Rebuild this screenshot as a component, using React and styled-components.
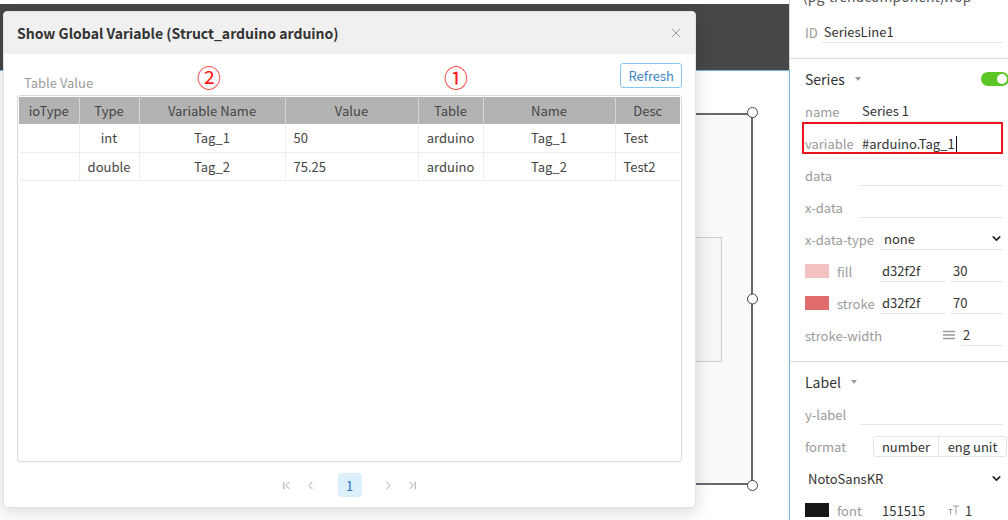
import styled, { createGlobalStyle } from "styled-components";
import { X, ChevronFirst, ChevronLast, ChevronLeft, ChevronRight, ChevronDown } from "lucide-react";

const GlobalStyle = createGlobalStyle`
  html, body { margin:0; padding:0; }
  body {
    font-family: "Noto Sans CJK KR", "Noto Sans", sans-serif;
    font-size:13px;
    color:#333;
    background:#fff;
  }
  * { box-sizing:border-box; }
`;

const Screen = styled.div`
  position:relative;
  display:flex;
  width:1008px;
  height:520px;
  overflow:hidden;
`;

/* ---------- canvas (behind the dialog) ---------- */

const Canvas = styled.div`
  width:790px;
  display:flex;
  flex-direction:column;
`;

const TopArea = styled.div`
  height:70px;
  padding-top:4px;
  border-right:1px solid #d6d6d6;
`;

const DarkBar = styled.div`
  height:100%;
  background:#474747;
`;

const Page = styled.div`
  position:relative;
  flex:1;
  background:#fff;
  border-top:1px solid #7bb2de;
  border-right:1px solid #7bb2de;
`;

const Chart = styled.div`
  position:absolute;
  left:401px;
  top:42px;
  width:352px;
  height:372px;
  background:#f9f9f9;
  border:2px solid #666a6e;
`;

const InnerBox = styled.div`
  position:absolute;
  left:100px;
  right:29px;
  top:122px;
  height:125px;
  border:1px solid #cdcdcd;
  background:#f6f6f6;
`;

const Handle = styled.span`
  position:absolute;
  right:-7px;
  width:11px;
  height:11px;
  border-radius:50%;
  background:#fff;
  border:1.5px solid #444;
  ${p => p.$pos === "top" && "top:-8px;"}
  ${p => p.$pos === "mid" && "top:50%; transform:translateY(-50%);"}
  ${p => p.$pos === "bottom" && "bottom:-8px;"}
`;

/* ---------- dialog ---------- */

const Modal = styled.div`
  position:absolute;
  left:3px;
  top:11px;
  width:693px;
  height:497px;
  background:#fff;
  border:1px solid #e2e2e2;
  border-radius:4px;
  box-shadow:0 4px 18px rgba(0,0,0,0.16);
  display:flex;
  flex-direction:column;
  z-index:5;
`;

const ModalHeader = styled.div`
  height:42px;
  flex-shrink:0;
  display:flex;
  align-items:center;
  justify-content:space-between;
  padding:0 11px 0 13px;
  background:#f0f0f0;
  border-radius:4px 4px 0 0;
`;

const Title = styled.h2`
  margin:0;
  font-size:14px;
  font-weight:700;
  color:#333;
`;

const CloseBtn = styled.button`
  display:flex;
  padding:0;
  border:none;
  background:none;
  color:#9a9a9a;
  cursor:pointer;
`;

const ModalBody = styled.div`
  flex:1;
  padding:9px 13px 0 13px;
  display:flex;
  flex-direction:column;
`;

const Toolbar = styled.div`
  position:relative;
  height:32px;
  display:flex;
  justify-content:space-between;
`;

const ToolLabel = styled.span`
  align-self:flex-end;
  padding-left:7px;
  line-height:24px;
  color:#9a9a9a;
`;

const RefreshBtn = styled.button`
  height:25px;
  padding:0 7px;
  border:1px solid #86c8f2;
  border-radius:3px;
  background:#fff;
  color:#3c86c2;
  font:inherit;
  font-size:13px;
  cursor:pointer;
`;

const Mark = styled.span`
  position:absolute;
  top:1px;
  left:${p => p.$x}px;
  font-size:24px;
  line-height:26px;
  color:#ff1a1a;
`;

const TableBox = styled.div`
  height:367px;
  border:1px solid #d9d9d9;
  border-radius:3px;
  padding:1px;
`;

const Table = styled.table`
  width:100%;
  border-collapse:collapse;
  table-layout:fixed;
`;

const Col = styled.col`
  width:${p => p.$w}px;
`;

const Th = styled.th`
  height:27px;
  padding:0;
  background:#b3b3b3;
  color:#444;
  font-weight:400;
  font-size:13px;
  text-align:center;
  border-left:1px solid #d4d4d4;
  &:first-child { border-left:none; }
`;

const Td = styled.td`
  height:28px;
  padding:0 8px;
  color:#444;
  text-align:${p => p.$align || "center"};
  border-left:1px solid #ededed;
  border-bottom:1px solid #ededed;
  &:first-child { border-left:none; }
`;

const Pager = styled.div`
  height:46px;
  display:flex;
  align-items:center;
  justify-content:center;
`;

const NavBtn = styled.span`
  width:24px;
  display:flex;
  justify-content:center;
  color:#8e8e8e;
`;

const PageNum = styled.span`
  width:24px;
  height:24px;
  margin:0 15px;
  display:flex;
  align-items:center;
  justify-content:center;
  border-radius:3px;
  background:#dcf0fc;
  color:#2d74b8;
`;

/* ---------- property panel ---------- */

const Panel = styled.aside`
  width:218px;
  height:520px;
  overflow:hidden;
  background:#fff;
`;

const ClipTitle = styled.div`
  height:6px;
  overflow:hidden;
  padding-left:13px;
`;

const ClipText = styled.div`
  margin-top:-13px;
  line-height:18px;
  font-size:14px;
  color:#555;
  white-space:nowrap;
`;

const Section = styled.section`
  padding:${p => p.$top}px 5px ${p => p.$bottom}px 15px;
  border-bottom:${p => (p.$last ? "none" : "1px solid #d9d9d9")};
`;

const SectionHead = styled.div`
  height:28px;
  margin-bottom:2px;
  display:flex;
  align-items:center;
  justify-content:space-between;
  font-size:14px;
  color:#333;
`;

const HeadTitle = styled.span`
  display:flex;
  align-items:center;
`;

const Caret = styled.span`
  width:0;
  height:0;
  margin-left:10px;
  border-left:3px solid transparent;
  border-right:3px solid transparent;
  border-top:4px solid #9a9a9a;
`;

const Toggle = styled.span`
  position:relative;
  width:28px;
  height:14px;
  margin-right:-6px;
  border-radius:7px;
  background:#5cc626;
  &::after {
    content:"";
    position:absolute;
    right:2px;
    top:2px;
    width:10px;
    height:10px;
    border-radius:50%;
    background:#fff;
  }
`;

const Row = styled.div`
  position:relative;
  height:32px;
  display:flex;
  align-items:center;
`;

const RowLabel = styled.span`
  flex-shrink:0;
  width:${p => (p.$w ? `${p.$w}px` : "auto")};
  margin-right:${p => p.$gap || 0}px;
  ${p => p.$grow && "flex:1;"}
  color:#9a9a9a;
  white-space:nowrap;
`;

const Field = styled.div`
  height:22px;
  line-height:21px;
  padding-left:${p => p.$pad ?? 2}px;
  color:#333;
  white-space:nowrap;
  ${p => (p.$w ? `width:${p.$w}px; flex-shrink:0;` : "flex:1;")}
  margin-left:${p => p.$ml || 0}px;
  border-bottom:${p => (p.$plain ? "none" : "1px solid #e6e6e6")};
  display:flex;
  align-items:center;
  justify-content:space-between;
`;

const Cursor = styled.span`
  display:inline-block;
  width:1px;
  height:17px;
  margin-left:1px;
  vertical-align:middle;
  background:#111;
`;

const RedBox = styled.div`
  position:absolute;
  left:-3px;
  right:0;
  top:-5px;
  height:32px;
  border:2px solid #e8161e;
  pointer-events:none;
`;

const Swatch = styled.span`
  width:24px;
  height:14px;
  margin-right:8px;
  flex-shrink:0;
  background:${p => p.$color};
`;

const Segment = styled.div`
  display:flex;
  height:21px;
  flex-shrink:0;
`;

const SegBtn = styled.span`
  width:${p => p.$w}px;
  display:flex;
  align-items:center;
  justify-content:center;
  border:1px solid #e4e4e4;
  border-left:${p => (p.$first ? "1px solid #e4e4e4" : "none")};
  border-radius:${p => (p.$first ? "3px 0 0 3px" : "0 3px 3px 0")};
  color:#333;
`;

const Value = styled.span`
  width:${p => p.$w}px;
  flex-shrink:0;
  color:#333;
`;

const IconSlot = styled.span`
  display:flex;
  align-items:center;
  margin-right:${p => p.$gap || 0}px;
`;

const columns = [
  { label: "ioType", w: 60 },
  { label: "Type", w: 60 },
  { label: "Variable Name", w: 146 },
  { label: "Value", w: 133, align: "left" },
  { label: "Table", w: 65 },
  { label: "Name", w: 132 },
  { label: "Desc", w: 65, align: "left" },
];

const rows = [
  ["", "int", "Tag_1", "50", "arduino", "Tag_1", "Test"],
  ["", "double", "Tag_2", "75.25", "arduino", "Tag_2", "Test2"],
];

const LinesIcon = () => (
  <svg width="12" height="10" viewBox="0 0 12 10">
    <path d="M0 1.5h12M0 5h12M0 8.5h12" stroke="#9a9a9a" strokeWidth="1.4" />
  </svg>
);

const FontSizeIcon = () => (
  <svg width="11" height="10" viewBox="0 0 11 10" fill="none" stroke="#9a9a9a" strokeWidth="1">
    <path d="M0.5 4.5h4M2.5 4.5v5M5 1h6M8 1v8.5" />
  </svg>
);

const App = () => {
  return (
    <Screen>
      <GlobalStyle />

      <Canvas>
        <TopArea>
          <DarkBar />
        </TopArea>
        <Page>
          <Chart>
            <InnerBox />
            <Handle $pos="top" />
            <Handle $pos="mid" />
            <Handle $pos="bottom" />
          </Chart>
        </Page>
      </Canvas>

      <Panel>
        <ClipTitle>
          <ClipText>(pg-trendcomponent).Top</ClipText>
        </ClipTitle>

        <Section $top={10} $bottom={10}>
          <Row>
            <RowLabel $gap={4}>ID</RowLabel>
            <Field>SeriesLine1</Field>
          </Row>
        </Section>

        <Section $top={6} $bottom={10}>
          <SectionHead>
            <HeadTitle>Series<Caret /></HeadTitle>
            <Toggle />
          </SectionHead>
          <Row>
            <RowLabel $w={55}>name</RowLabel>
            <Field>Series 1</Field>
          </Row>
          <Row>
            <RowLabel $w={55}>variable</RowLabel>
            <Field $plain>
              <span>#arduino.Tag_1<Cursor /></span>
            </Field>
            <RedBox />
          </Row>
          <Row>
            <RowLabel $w={55}>data</RowLabel>
            <Field />
          </Row>
          <Row>
            <RowLabel $w={55}>x-data</RowLabel>
            <Field />
          </Row>
          <Row>
            <RowLabel $gap={6}>x-data-type</RowLabel>
            <Field $pad={4}>
              none
              <ChevronDown size={13} strokeWidth={3} color="#222" />
            </Field>
          </Row>
          <Row>
            <Swatch $color="#f3c1c1" />
            <RowLabel $w={43}>fill</RowLabel>
            <Field $w={65}>d32f2f</Field>
            <Field $ml={6}>30</Field>
          </Row>
          <Row>
            <Swatch $color="#e06b6b" />
            <RowLabel $w={43}>stroke</RowLabel>
            <Field $w={65}>d32f2f</Field>
            <Field $ml={6}>70</Field>
          </Row>
          <Row>
            <RowLabel $grow>stroke-width</RowLabel>
            <IconSlot $gap={6}><LinesIcon /></IconSlot>
            <Field $w={42}>2</Field>
          </Row>
        </Section>

        <Section $top={6} $bottom={0} $last>
          <SectionHead>
            <HeadTitle>Label<Caret /></HeadTitle>
          </SectionHead>
          <Row>
            <RowLabel $w={55}>y-label</RowLabel>
            <Field />
          </Row>
          <Row>
            <RowLabel $w={68}>format</RowLabel>
            <Segment>
              <SegBtn $first $w={66}>number</SegBtn>
              <SegBtn $w={68}>eng unit</SegBtn>
            </Segment>
          </Row>
          <Row>
            <Field $plain $pad={3}>
              NotoSansKR
              <ChevronDown size={13} strokeWidth={3} color="#222" />
            </Field>
          </Row>
          <Row>
            <Swatch $color="#151515" />
            <RowLabel $w={45}>font</RowLabel>
            <Value $w={66}>151515</Value>
            <IconSlot $gap={6}><FontSizeIcon /></IconSlot>
            <Value $w={20}>1</Value>
          </Row>
        </Section>
      </Panel>

      <Modal>
        <ModalHeader>
          <Title>Show Global Variable (Struct_arduino arduino)</Title>
          <CloseBtn aria-label="Close">
            <X size={16} strokeWidth={1.5} />
          </CloseBtn>
        </ModalHeader>

        <ModalBody>
          <Toolbar>
            <ToolLabel>Table Value</ToolLabel>
            <Mark $x={180}>②</Mark>
            <Mark $x={427}>①</Mark>
            <RefreshBtn>Refresh</RefreshBtn>
          </Toolbar>

          <TableBox>
            <Table>
              <colgroup>
                {columns.map(c => <Col key={c.label} $w={c.w} />)}
              </colgroup>
              <thead>
                <tr>
                  {columns.map(c => <Th key={c.label}>{c.label}</Th>)}
                </tr>
              </thead>
              <tbody>
                {rows.map((r, i) => (
                  <tr key={i}>
                    {r.map((v, j) => (
                      <Td key={j} $align={columns[j].align}>{v}</Td>
                    ))}
                  </tr>
                ))}
              </tbody>
            </Table>
          </TableBox>

          <Pager>
            <NavBtn><ChevronFirst size={13} strokeWidth={1.5} /></NavBtn>
            <NavBtn><ChevronLeft size={13} strokeWidth={1.5} /></NavBtn>
            <PageNum>1</PageNum>
            <NavBtn><ChevronRight size={13} strokeWidth={1.5} /></NavBtn>
            <NavBtn><ChevronLast size={13} strokeWidth={1.5} /></NavBtn>
          </Pager>
        </ModalBody>
      </Modal>
    </Screen>
  );
};

export default App;
